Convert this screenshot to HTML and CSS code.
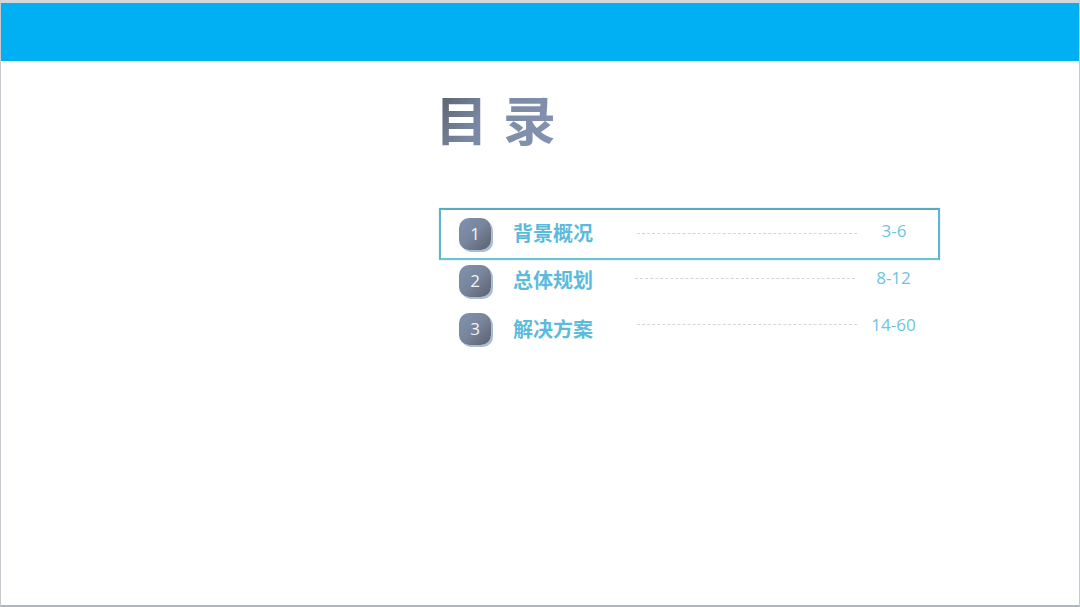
FILE: index.html
```html
<!DOCTYPE html>
<html lang="zh">
<head>
<meta charset="utf-8">
<title>目录</title>
<link rel="stylesheet" href="styles.css">
</head>
<body>
<div class="slide">
  <header class="banner"></header>
  <main class="content">
    <h1 class="title"><span>目</span><span>录</span></h1>
    <ul class="toc">
      <li class="row row-active">
        <span class="badge">1</span>
        <span class="label">背景概况</span>
        <span class="leader"></span>
        <span class="pages">3-6</span>
      </li>
      <li class="row row-second">
        <span class="badge">2</span>
        <span class="label">总体规划</span>
        <span class="leader"></span>
        <span class="pages">8-12</span>
      </li>
      <li class="row row-third">
        <span class="badge">3</span>
        <span class="label">解决方案</span>
        <span class="leader"></span>
        <span class="pages">14-60</span>
      </li>
    </ul>
  </main>
</div>
</body>
</html>
```
FILE: styles.css
```css
* { box-sizing: border-box; }
html, body { margin: 0; padding: 0; width: 1080px; height: 607px; overflow: hidden; background: #fff; }
.slide {
  width: 1080px;
  height: 607px;
  display: flex;
  flex-direction: column;
  background: #fff;
  border-top: 3px solid #d4d6da;
  border-left: 1px solid #c6c9ce;
  border-right: 1px solid #c6c9ce;
  border-bottom: 2px solid #aeb4c0;
}
.banner { height: 58px; flex: none; background: #00b0f3; }
.content { flex: 1; padding-left: 434px; }
.title {
  margin: 21px 0 0;
  width: 124px;
  height: 73px;
  display: flex;
  gap: 15px;
  font: 700 53px/73px "Noto Sans CJK SC", sans-serif;
  background: linear-gradient(125deg, #565b64 0%, #7a89a4 42%, #8595b2 100%);
  -webkit-background-clip: text;
  background-clip: text;
  color: transparent;
}
.toc { list-style: none; margin: 53px 0 0 4px; padding: 0; width: 501px; }
.row {
  height: 47px;
  display: grid;
  grid-template-columns: 33px 145px 220px 74px;
  align-items: center;
  padding-left: 20px;
}
.row-second { margin-top: -3px; }
.row-third { margin-top: 1px; }
.row-active {
  height: 52px;
  border: 2px solid #5fb5c9;
  border-top-color: #5aa9c4;
  border-bottom-color: #6cc3d3;
  box-shadow: 0 0 1px rgba(95, 181, 201, 0.7);
  padding-left: 18px;
}
.badge {
  width: 32px;
  height: 32px;
  border-radius: 10px;
  background: linear-gradient(135deg, #8293ae 0%, #77849c 50%, #5c6069 100%);
  box-shadow: 2px 2px 0 #a9bdd6;
  color: #f2f4f7;
  font: 400 17px/32px "Open Sans", sans-serif;
  text-align: center;
}
.label {
  margin: 0 0 2px 21px;
  font: 700 20px/30px "Noto Sans CJK SC", sans-serif;
  color: #5cbbdc;
  white-space: nowrap;
}
.row-third .label { margin-bottom: 0; }
.leader { height: 0; border-top: 1px dashed #d6d6d6; margin-top: -2px; }
.pages {
  font: 400 17px/22px "Open Sans", sans-serif;
  color: #6cc4e2;
  text-align: center;
  position: relative;
  top: -3px;
}
.row-second .leader { margin: -4px 2px 0 -2px; }
.row-second .pages { margin-left: -1px; }
.row-third .leader { margin: -8px 0 0; }
.row-third .pages { top: -4px; margin-left: -1px; }
```
